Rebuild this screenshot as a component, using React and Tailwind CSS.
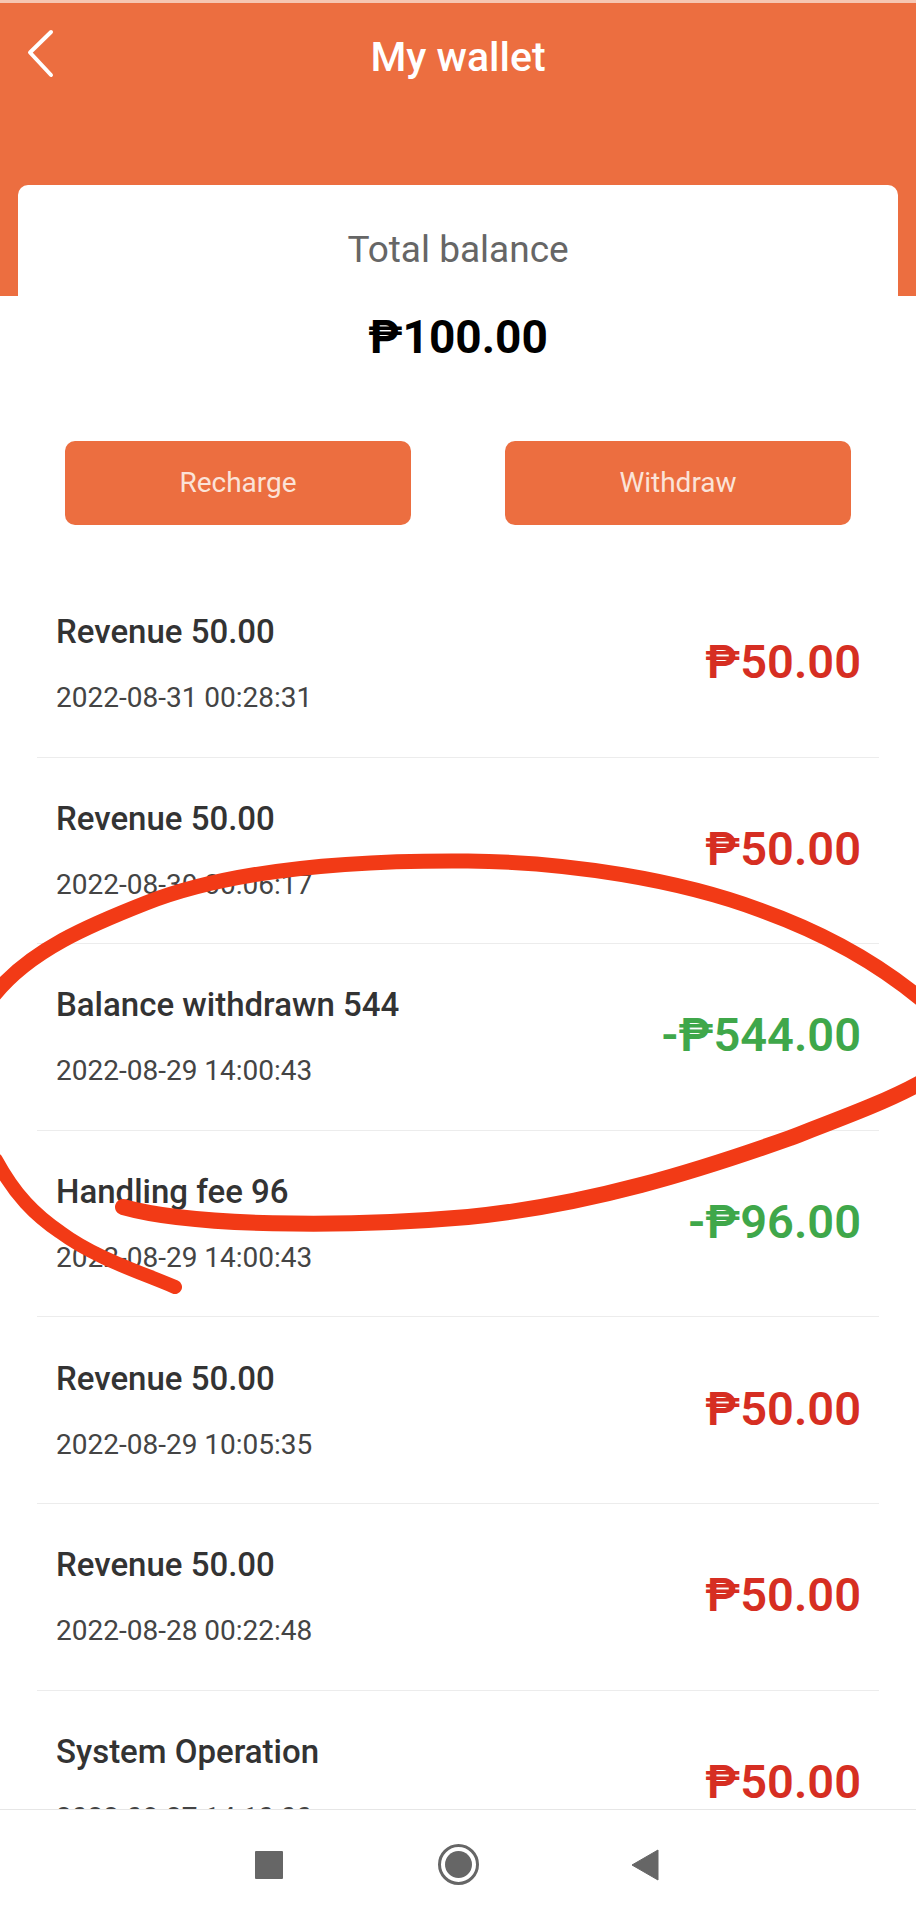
const ROWS = [
  { title: 'Revenue 50.00', date: '2022-08-31 00:28:31', amount: '₱50.00' },
  { title: 'Revenue 50.00', date: '2022-08-30 00:06:17', amount: '₱50.00' },
  { title: 'Balance withdrawn 544', date: '2022-08-29 14:00:43', amount: '-₱544.00', out: true },
  { title: 'Handling fee 96', date: '2022-08-29 14:00:43', amount: '-₱96.00', out: true },
  { title: 'Revenue 50.00', date: '2022-08-29 10:05:35', amount: '₱50.00' },
  { title: 'Revenue 50.00', date: '2022-08-28 00:22:48', amount: '₱50.00' },
  { title: 'System Operation', date: '2022-08-27 14:10:00', amount: '₱50.00' },
]

function Row({ row }) {
  return (
    <div className="h-[186.6px] shrink-0 flex items-center justify-between border-b border-[#ececec] pl-[19px] pr-[18px]">
      <div className="flex flex-col gap-[28px] pt-[3px]">
        <div className="text-[33px] leading-[38px] font-medium text-[#333]">{row.title}</div>
        <div className="text-[28px] leading-[38px] text-[#444]">{row.date}</div>
      </div>
      <div className={`text-[47px] leading-[52px] font-semibold pb-[3px] ${row.out ? 'text-[#3fa74a]' : 'text-[#d62e22]'}`}>
        {row.amount}
      </div>
    </div>
  )
}

function Scribble() {
  return (
    <svg className="absolute left-0 top-0 pointer-events-none" width="916" height="1920" viewBox="0 0 916 1920" fill="none">
      <path
        d="M-6 995 C 30 950, 90 925, 146 903 C 230 870, 350 860, 468 861 C 570 862, 680 880, 760 910 C 830 935, 880 965, 922 1000"
        stroke="#f23a16" strokeWidth="15" strokeLinecap="round"
      />
      <path
        d="M123 1207 C 190 1226, 340 1228, 468 1217 C 590 1205, 700 1170, 790 1138 C 850 1115, 890 1100, 922 1082"
        stroke="#f23a16" strokeWidth="16" strokeLinecap="round"
      />
      <path
        d="M-4 1160 C 15 1195, 35 1215, 60 1232 C 95 1258, 140 1272, 175 1287"
        stroke="#f23a16" strokeWidth="14" strokeLinecap="round"
      />
    </svg>
  )
}

export default function App() {
  return (
    <div className="relative w-[916px] h-[1920px] overflow-hidden bg-white flex flex-col font-['Roboto',sans-serif]">
      <div className="h-[3px] shrink-0 bg-[#f6c6b2]" />
      <div className="relative h-[293px] shrink-0 bg-[#ec6e40]">
        <div className="flex items-center justify-center h-[110px] text-[41px] font-medium text-white">My wallet</div>
        <svg className="absolute left-[26px] top-[26px]" width="30" height="50" viewBox="0 0 30 50" fill="none">
          <path d="M25 3 L4 23.5 L25 46" stroke="#fff" strokeWidth="4" strokeLinecap="round" strokeLinejoin="round" />
        </svg>
      </div>

      <div className="relative mx-[18px] -mt-[111px] shrink-0 bg-white rounded-t-[10px] pt-[43px] h-[386px]">
        <div className="text-center text-[37px] leading-[44px] text-[#666]">Total balance</div>
        <div className="text-center text-[46px] leading-[52px] font-bold text-black mt-[39px]">₱100.00</div>
        <div className="flex justify-between px-[47px] mt-[78px]">
          <button className="w-[346px] h-[84px] rounded-[10px] bg-[#ec6e40] text-[28px] text-[#fbe3d8]">Recharge</button>
          <button className="w-[346px] h-[84px] rounded-[10px] bg-[#ec6e40] text-[28px] text-[#fbe3d8]">Withdraw</button>
        </div>
      </div>

      <div className="flex-1 min-h-0 overflow-hidden mx-[37px]">
        {ROWS.map((row, i) => <Row key={i} row={row} />)}
      </div>

      <div className="relative h-[111px] shrink-0 bg-white border-t border-[#e6e6e6]">
        <div className="w-[28px] h-[28px] bg-[#666] rounded-[1px] absolute left-[255px] top-[41px]" />
        <div className="w-[41px] h-[41px] rounded-full border-[3px] border-[#666] absolute left-[438px] top-[34px] flex items-center justify-center">
          <div className="w-[27px] h-[27px] rounded-full bg-[#666]" />
        </div>
        <svg className="absolute left-[631px] top-[39px]" width="28" height="32" viewBox="0 0 28 32">
          <path d="M27 1 L27 31 L1 16 Z" fill="#666" stroke="#666" strokeLinejoin="round" />
        </svg>
      </div>

      <Scribble />
    </div>
  )
}
